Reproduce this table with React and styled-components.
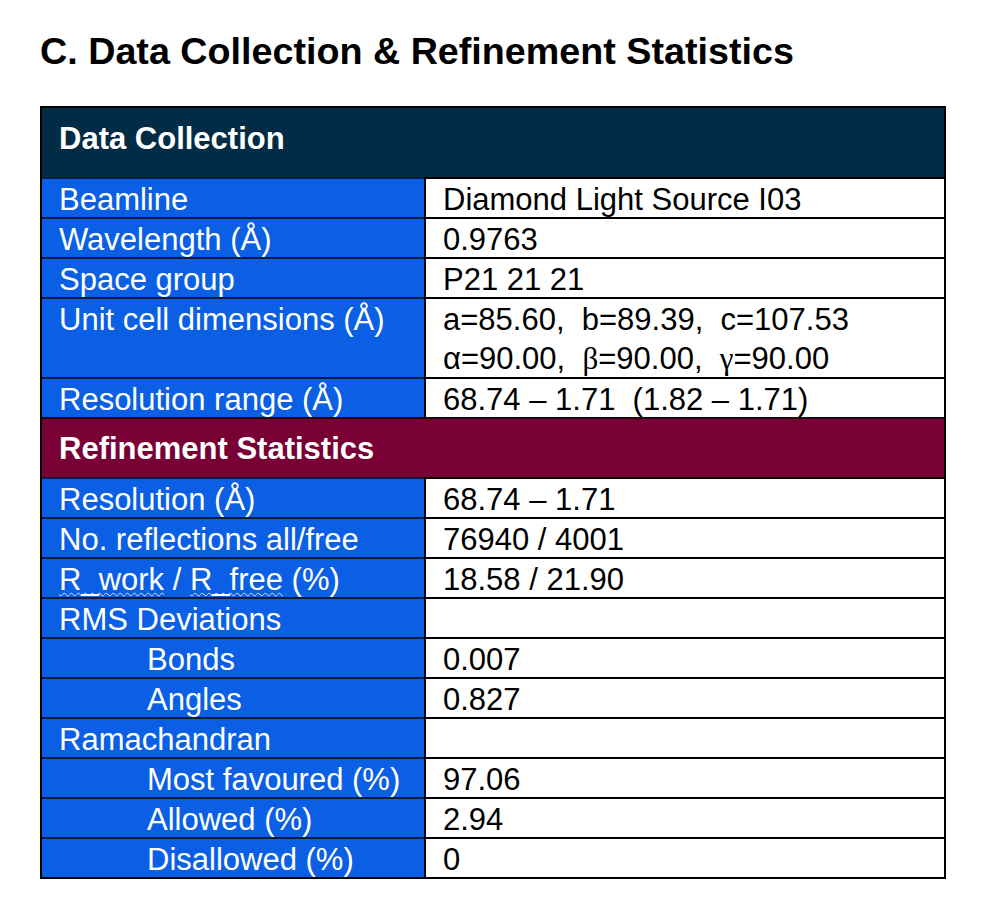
import React from "react";
import styled, { createGlobalStyle } from "styled-components";

const Global = createGlobalStyle`
  html, body { margin: 0; padding: 0; background: #ffffff; }
  body { font-family: "Liberation Sans", Arial, sans-serif; }
`;

const Page = styled.div`
  padding: 29px 0 40px 40px;
  width: 906px;
`;

const Title = styled.h1`
  margin: 0 0 33px;
  font-size: 37.7px;
  line-height: 44px;
  font-weight: 700;
  color: #000;
`;

const Table = styled.div`
  border: 2px solid #000;
  display: flex;
  flex-direction: column;
`;

const Section = styled.div`
  background: ${(p) => p.$bg};
  color: #fff;
  font-weight: 700;
  font-size: 31px;
  height: ${(p) => p.$h}px;
  box-sizing: border-box;
  padding: ${(p) => p.$pt}px 17px 0;
  line-height: 31px;
  border-top: ${(p) => (p.$first ? "none" : "2px solid #1a0a12")};
`;

const Row = styled.div`
  display: grid;
  grid-template-columns: 382px 1fr;
  height: ${(p) => p.$h}px;
  font-size: 31px;
`;

const Cell = styled.div`
  box-sizing: border-box;
  height: 100%;
  border-top: 2px solid;
  white-space: nowrap;
  padding-top: ${(p) => (p.$tall ? 1 : 4)}px;
  line-height: ${(p) => (p.$tall ? 39 : 34)}px;
`;

const Label = styled(Cell)`
  background: #0a5fe4;
  color: #fff;
  border-top-color: #0c1c40;
  padding-left: ${(p) => (p.$indent ? 105 : 17)}px;
`;

const Value = styled(Cell)`
  background: #fff;
  color: #000;
  border-top-color: #000;
  border-left: 2px solid #000;
  padding-left: 17px;
`;

const Line = styled.div``;

const Serif = styled.span`
  font-family: "Liberation Serif", "Times New Roman", serif;
`;

const Squiggle = styled.span`
  text-decoration: underline wavy #d4e2ff;
  text-decoration-thickness: 1px;
  text-underline-offset: 2px;
`;

const dataRows = [
  { label: "Beamline", value: "Diamond Light Source I03" },
  { label: "Wavelength (Å)", value: "0.9763" },
  { label: "Space group", value: "P21 21 21" },
  {
    label: "Unit cell dimensions (Å)",
    value: (
      <>
        <Line>a=85.60,&nbsp; b=89.39,&nbsp; c=107.53</Line>
        <Line>
          α=90.00,&nbsp; <Serif>β</Serif>=90.00,&nbsp; <Serif>γ</Serif>=90.00
        </Line>
      </>
    ),
    tall: true,
  },
  { label: "Resolution range (Å)", value: "68.74 – 1.71\u00a0 (1.82 – 1.71)" },
];

const refRows = [
  { label: "Resolution (Å)", value: "68.74 – 1.71" },
  { label: "No. reflections all/free", value: "76940 / 4001" },
  {
    label: (
      <>
        <Squiggle>R_work</Squiggle> / <Squiggle>R_free</Squiggle> (%)
      </>
    ),
    value: "18.58 / 21.90",
  },
  { label: "RMS Deviations", value: "" },
  { label: "Bonds", value: "0.007", indent: true },
  { label: "Angles", value: "0.827", indent: true },
  { label: "Ramachandran", value: "" },
  { label: "Most favoured (%)", value: "97.06", indent: true },
  { label: "Allowed (%)", value: "2.94", indent: true },
  { label: "Disallowed (%)", value: "0", indent: true },
];

function StatRow({ r }) {
  return (
    <Row $h={r.tall ? 80 : 40}>
      <Label $indent={r.indent} $tall={r.tall}>
        {r.label}
      </Label>
      <Value $tall={r.tall}>{r.value}</Value>
    </Row>
  );
}

export default function App() {
  return (
    <>
      <Global />
      <Page>
        <Title>C. Data Collection &amp; Refinement Statistics</Title>
        <Table>
          <Section $bg="#022b46" $h={69} $pt={15} $first>
            Data Collection
          </Section>
          {dataRows.map((r, i) => (
            <StatRow key={i} r={r} />
          ))}
          <Section $bg="#780035" $h={60} $pt={14}>
            Refinement Statistics
          </Section>
          {refRows.map((r, i) => (
            <StatRow key={i} r={r} />
          ))}
        </Table>
      </Page>
    </>
  );
}
